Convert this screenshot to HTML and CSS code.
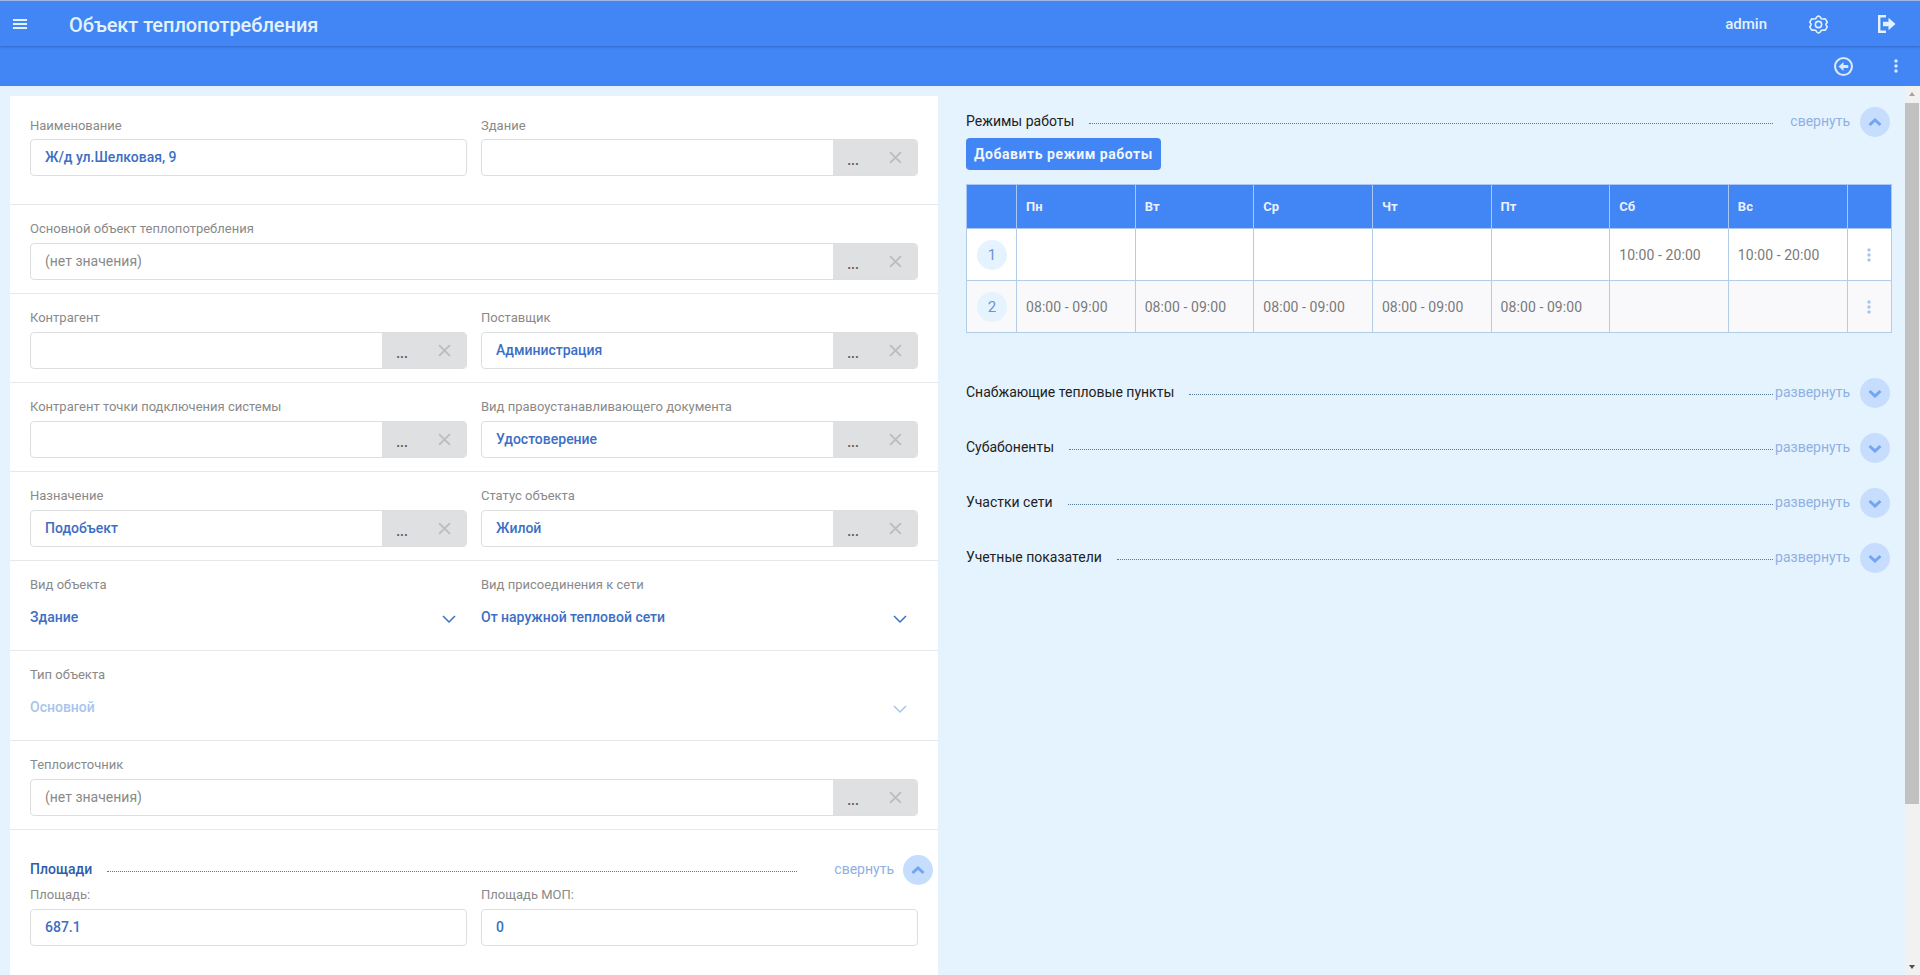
FILE: index.html
```html
<!DOCTYPE html>
<html lang="ru">

<head>
    <meta charset="UTF-8">
    <title>Объект теплопотребления</title>
    <link rel="stylesheet" href="styles.css">
</head>

<body>
    <header class="topbar">
        <svg class="icon-menu" viewBox="0 0 14 10"><path d="M0 0h14v2H0zM0 4h14v2H0zM0 8h14v2H0z"/></svg>
        <h1 class="page-title">Объект теплопотребления</h1>
        <span class="user-name">admin</span>
        <svg class="icon-gear" viewBox="0 0 24 24" fill="none" stroke-width="1.8" stroke-linejoin="round">
            <path d="M12 2.2l2.2 1.3 1 2 2.2.3 2.4-.2 2.2 3.8-1.5 1.9v1.4l1.5 1.9-2.2 3.8-2.4-.2-2.2.3-1 2-2.2 1.3-2.2-1.3-1-2-2.2-.3-2.4.2-2.2-3.8 1.5-1.9v-1.4L2 9.4l2.2-3.8 2.4.2 2.2-.3 1-2z"/>
            <circle cx="12" cy="12" r="3.6"/>
        </svg>
        <svg class="icon-exit" viewBox="0 0 18 18"><path d="M0 0h8v2.400H2.400v13.200H8V18H0z"/><path d="M10.500 2.800L17.500 9l-7 6.200v-4H5V6.800h5.500z"/></svg>
    </header>
    <div class="toolbar">
        <svg class="icon-back" viewBox="0 0 20 20"><path fill-rule="evenodd" d="M10 0a10 10 0 1 1 0 20a10 10 0 0 1 0-20zm0 2.200a7.800 7.800 0 1 0 0 15.600a7.800 7.800 0 0 0 0-15.600z"/><path d="M10 5.200v3.300h5v3h-5v3.300L4.800 10z"/></svg>
        <svg class="icon-dots" viewBox="0 0 4 14"><circle cx="2" cy="2" r="1.700"/><circle cx="2" cy="7" r="1.700"/><circle cx="2" cy="12" r="1.700"/></svg>
    </div>

    <main class="content">
        <section class="form-panel">
            <div class="form-row form-row-first">
                <div class="field">
                    <label>Наименование</label>
                    <div class="input"><span class="value">Ж/д ул.Шелковая, 9</span></div>
                </div>
                <div class="field">
                    <label>Здание</label>
                    <div class="input"><span class="value"></span><div class="input-btns"><span class="btn-more">...</span><svg class="btn-clear" viewBox="0 0 12 12"><path d="M1 1l10 10M11 1L1 11"/></svg></div></div>
                </div>
            </div>
            <div class="form-row">
                <div class="field field-wide">
                    <label>Основной объект теплопотребления</label>
                    <div class="input"><span class="value empty">(нет значения)</span><div class="input-btns"><span class="btn-more">...</span><svg class="btn-clear" viewBox="0 0 12 12"><path d="M1 1l10 10M11 1L1 11"/></svg></div></div>
                </div>
            </div>
            <div class="form-row">
                <div class="field">
                    <label>Контрагент</label>
                    <div class="input"><span class="value"></span><div class="input-btns"><span class="btn-more">...</span><svg class="btn-clear" viewBox="0 0 12 12"><path d="M1 1l10 10M11 1L1 11"/></svg></div></div>
                </div>
                <div class="field">
                    <label>Поставщик</label>
                    <div class="input"><span class="value">Администрация</span><div class="input-btns"><span class="btn-more">...</span><svg class="btn-clear" viewBox="0 0 12 12"><path d="M1 1l10 10M11 1L1 11"/></svg></div></div>
                </div>
            </div>
            <div class="form-row">
                <div class="field">
                    <label>Контрагент точки подключения системы</label>
                    <div class="input"><span class="value"></span><div class="input-btns"><span class="btn-more">...</span><svg class="btn-clear" viewBox="0 0 12 12"><path d="M1 1l10 10M11 1L1 11"/></svg></div></div>
                </div>
                <div class="field">
                    <label>Вид правоустанавливающего документа</label>
                    <div class="input"><span class="value">Удостоверение</span><div class="input-btns"><span class="btn-more">...</span><svg class="btn-clear" viewBox="0 0 12 12"><path d="M1 1l10 10M11 1L1 11"/></svg></div></div>
                </div>
            </div>
            <div class="form-row">
                <div class="field">
                    <label>Назначение</label>
                    <div class="input"><span class="value">Подобъект</span><div class="input-btns"><span class="btn-more">...</span><svg class="btn-clear" viewBox="0 0 12 12"><path d="M1 1l10 10M11 1L1 11"/></svg></div></div>
                </div>
                <div class="field">
                    <label>Статус объекта</label>
                    <div class="input"><span class="value">Жилой</span><div class="input-btns"><span class="btn-more">...</span><svg class="btn-clear" viewBox="0 0 12 12"><path d="M1 1l10 10M11 1L1 11"/></svg></div></div>
                </div>
            </div>
            <div class="form-row form-row-tall">
                <div class="field">
                    <label>Вид объекта</label>
                    <div class="select"><span class="value select-value">Здание</span><svg class="select-arrow" viewBox="0 0 14 9"><path d="M1 1l6 6 6-6"/></svg></div>
                </div>
                <div class="field">
                    <label>Вид присоединения к сети</label>
                    <div class="select"><span class="value select-value">От наружной тепловой сети</span><svg class="select-arrow" viewBox="0 0 14 9"><path d="M1 1l6 6 6-6"/></svg></div>
                </div>
            </div>
            <div class="form-row form-row-tall">
                <div class="field field-wide">
                    <label>Тип объекта</label>
                    <div class="select select-disabled"><span class="value select-value">Основной</span><svg class="select-arrow" viewBox="0 0 14 9"><path d="M1 1l6 6 6-6"/></svg></div>
                </div>
            </div>
            <div class="form-row">
                <div class="field field-wide">
                    <label>Теплоисточник</label>
                    <div class="input"><span class="value empty">(нет значения)</span><div class="input-btns"><span class="btn-more">...</span><svg class="btn-clear" viewBox="0 0 12 12"><path d="M1 1l10 10M11 1L1 11"/></svg></div></div>
                </div>
            </div>
            <div class="area-block">
                <div class="group-head group-head-form">
                    <span class="group-title">Площади</span>
                    <span class="group-line"></span>
                    <span class="group-toggle">свернуть</span>
                    <span class="group-btn"><svg viewBox="0 0 14 9"><path d="M1.500 7L7 2l5.500 5"/></svg></span>
                </div>
                <div class="area-fields">
                    <div class="field">
                        <label>Площадь:</label>
                        <div class="input"><span class="value">687.1</span></div>
                    </div>
                    <div class="field">
                        <label>Площадь МОП:</label>
                        <div class="input"><span class="value">0</span></div>
                    </div>
                </div>
            </div>
        </section>

        <section class="side-panel">
            <div class="group-head">
                <span class="group-title">Режимы работы</span>
                <span class="group-line"></span>
                <span class="group-toggle">свернуть</span>
                <span class="group-btn"><svg viewBox="0 0 14 9"><path d="M1.500 7L7 2l5.500 5"/></svg></span>
            </div>
            <button class="add-btn" type="button">Добавить режим работы</button>
            <table class="modes">
                <thead>
                    <tr><th class="col-num"></th><th>Пн</th><th>Вт</th><th>Ср</th><th>Чт</th><th>Пт</th><th>Сб</th><th>Вс</th><th class="col-menu"></th></tr>
                </thead>
                <tbody>
                    <tr>
                        <td><span class="row-num">1</span></td>
                        <td></td><td></td><td></td><td></td><td></td>
                        <td>10:00 - 20:00</td><td>10:00 - 20:00</td>
                        <td class="cell-menu"><svg class="row-dots" viewBox="0 0 4 14"><circle cx="2" cy="2" r="1.700"/><circle cx="2" cy="7" r="1.700"/><circle cx="2" cy="12" r="1.700"/></svg></td>
                    </tr>
                    <tr class="row-alt">
                        <td><span class="row-num">2</span></td>
                        <td>08:00 - 09:00</td><td>08:00 - 09:00</td><td>08:00 - 09:00</td><td>08:00 - 09:00</td><td>08:00 - 09:00</td>
                        <td></td><td></td>
                        <td class="cell-menu"><svg class="row-dots" viewBox="0 0 4 14"><circle cx="2" cy="2" r="1.700"/><circle cx="2" cy="7" r="1.700"/><circle cx="2" cy="12" r="1.700"/></svg></td>
                    </tr>
                </tbody>
            </table>

            <div class="collapsed-groups">
                <div class="group-head">
                    <span class="group-title">Снабжающие тепловые пункты</span>
                    <span class="group-line"></span>
                    <span class="group-toggle">развернуть</span>
                    <span class="group-btn"><svg viewBox="0 0 14 9"><path d="M1.500 2L7 7l5.500-5"/></svg></span>
                </div>
                <div class="group-head">
                    <span class="group-title">Субабоненты</span>
                    <span class="group-line"></span>
                    <span class="group-toggle">развернуть</span>
                    <span class="group-btn"><svg viewBox="0 0 14 9"><path d="M1.500 2L7 7l5.500-5"/></svg></span>
                </div>
                <div class="group-head">
                    <span class="group-title">Участки сети</span>
                    <span class="group-line"></span>
                    <span class="group-toggle">развернуть</span>
                    <span class="group-btn"><svg viewBox="0 0 14 9"><path d="M1.500 2L7 7l5.500-5"/></svg></span>
                </div>
                <div class="group-head">
                    <span class="group-title">Учетные показатели</span>
                    <span class="group-line"></span>
                    <span class="group-toggle">развернуть</span>
                    <span class="group-btn"><svg viewBox="0 0 14 9"><path d="M1.500 2L7 7l5.500-5"/></svg></span>
                </div>
            </div>
        </section>

        <div class="scrollbar">
            <span class="scroll-up"></span>
            <span class="scroll-thumb"></span>
            <span class="scroll-down"></span>
        </div>
    </main>
</body>

</html>
```

FILE: styles.css
```css
* {
    box-sizing: border-box;
}

html,
body {
    height: 100%;
}

body {
    margin: 0;
    display: flex;
    flex-direction: column;
    overflow: hidden;
    background-color: #e5f3ff;
    font-family: Roboto, "Liberation Sans", sans-serif;
    font-size: 14px;
}

/* Top bars */
.topbar {
    height: 46px;
    flex: none;
    display: flex;
    align-items: center;
    padding: 1px 0 0 13px;
    background-color: #4285f4;
    border-top: 1px solid #9db8e8;
    box-shadow: 0 1px 2px rgba(30, 70, 150, 0.45);
    position: relative;
    color: #e3f2fd;
    fill: #e3f2fd;
    stroke: #e3f2fd;
}

.icon-menu {
    width: 14px;
    height: 10px;
    stroke: none;
}

.page-title {
    margin: 0 0 0 42px;
    padding-top: 2px;
    font-size: 20px;
    font-weight: 500;
    line-height: 24px;
    letter-spacing: -0.05px;
    flex: 1;
}

.user-name {
    font-size: 15px;
    font-weight: 500;
}

.icon-gear {
    width: 21px;
    height: 21px;
    margin-left: 41px;
    fill: none;
}

.icon-exit {
    width: 18px;
    height: 18px;
    margin: 0 24px 0 49px;
    stroke: none;
}

.toolbar {
    height: 40px;
    flex: none;
    display: flex;
    align-items: center;
    justify-content: flex-end;
    padding-right: 22px;
    background-color: #4285f4;
    fill: #dbe9fd;
}

.icon-back {
    width: 19px;
    height: 19px;
    margin-right: 41px;
}

.icon-dots {
    width: 4px;
    height: 14px;
}

/* Main area */
.content {
    flex: 1;
    min-height: 0;
    display: flex;
    overflow: hidden;
}

.form-panel {
    width: 928px;
    margin: 10px 0 0 10px;
    background-color: #fff;
    flex: none;
}

.form-row {
    height: 89px;
    padding: 15px 20px 0;
    display: grid;
    grid-template-columns: 437px 437px;
    column-gap: 14px;
    border-bottom: 1px solid #e6e8ea;
}

.form-row-first {
    height: 109px;
    padding-top: 21px;
}

.form-row-first label {
    margin-bottom: 4px;
}

.form-row-tall {
    height: 90px;
}

.field-wide {
    grid-column: 1 / 3;
}

label {
    display: block;
    height: 18px;
    margin-bottom: 5px;
    color: #8a8a8a;
    font-size: 13px;
    line-height: 18px;
}

.input {
    height: 37px;
    display: flex;
    align-items: center;
    border: 1px solid #dcdee0;
    border-radius: 4px;
    overflow: hidden;
}

.value {
    flex: 1;
    padding: 0 0 2px 14px;
    color: #3c6fc4;
    font-weight: 500;
}

.value.empty {
    color: #8a8a8a;
    font-weight: 400;
}

.input-btns {
    width: 85px;
    height: 37px;
    margin: 0 -1px;
    flex: none;
    display: flex;
    align-items: center;
    background-color: #dfe0e2;
}

.btn-more {
    width: 40px;
    padding-top: 4px;
    text-align: center;
    color: #555;
    font-weight: 500;
}

.btn-clear {
    width: 13px;
    height: 13px;
    margin-left: 16px;
    fill: none;
    stroke: #bcbdc0;
    stroke-width: 1.8;
}

.select {
    height: 37px;
    display: flex;
    align-items: center;
}

.select-value {
    padding-left: 0;
}

.select-arrow {
    width: 14px;
    height: 9px;
    margin: 3px 11px 0 0;
    fill: none;
    stroke: #3c6fc4;
    stroke-width: 1.5;
}

.select-disabled .select-value {
    color: #a9c4ec;
}

.select-disabled .select-arrow {
    stroke: #a9c4ec;
}

/* Areas block */
.area-block {
    padding: 25px 20px 0;
}

.area-fields {
    display: grid;
    grid-template-columns: 437px 437px;
    column-gap: 14px;
    margin-top: 1px;
}

/* Group headers */
.group-head {
    height: 30px;
    display: flex;
    align-items: center;
}

.group-title {
    padding-bottom: 2px;
    color: #222;
    font-size: 14px;
}

.group-line {
    flex: 1;
    margin: 2px 2px 0 15px;
    border-top: 1px dotted #55799b;
}

.group-toggle {
    width: 75px;
    padding-bottom: 2px;
    text-align: right;
    color: #8fb0e3;
    font-size: 14px;
}

.group-btn {
    width: 30px;
    height: 30px;
    margin-left: 10px;
    display: flex;
    align-items: center;
    justify-content: center;
    border-radius: 50%;
    background-color: #c6ddfd;
}

.group-btn svg {
    width: 14px;
    height: 9px;
    fill: none;
    stroke: #72a5f3;
    stroke-width: 3;
}

.group-head-form {
    margin-right: -15px;
}

.group-head-form .group-title {
    color: #2d5ea8;
    font-weight: 500;
}

.group-head-form .group-line {
    margin-right: 37px;
}

.group-head-form .group-toggle {
    width: 60px;
    padding-bottom: 3px;
}

.group-head-form .group-btn {
    margin-left: 9px;
}

/* Right side */
.side-panel {
    flex: 1;
    min-width: 0;
    padding: 21px 13px 0 28px;
}

.side-panel > .group-head {
    padding-right: 2px;
}

.add-btn {
    display: block;
    width: 195px;
    height: 32px;
    margin-top: 1px;
    padding: 0;
    background-color: #4285f4;
    color: #f0f6ff;
    border: none;
    border-radius: 4px;
    font-family: inherit;
    font-size: 14px;
    font-weight: 700;
    letter-spacing: 0.55px;
}

.modes {
    width: 926px;
    margin-top: 14px;
    border-collapse: collapse;
    table-layout: fixed;
    color: #7a7a7a;
    font-size: 14px;
    letter-spacing: 0.08px;
}

.modes th,
.modes td {
    padding: 0 0 0 9px;
    border: 1px solid #b4cde6;
    text-align: left;
}

.modes th {
    height: 44px;
    background-color: #4285f4;
    color: #e8f1ff;
    font-size: 13px;
    font-weight: 700;
    border-color: #a9c8f5;
}

.modes td {
    height: 52px;
    background-color: #fff;
}

.modes .row-alt td {
    background-color: #f9f9fc;
}

.modes .col-num {
    width: 50px;
}

.modes .col-menu {
    width: 44.5px;
}

.row-num {
    display: block;
    width: 30px;
    height: 30px;
    margin-left: 1px;
    border-radius: 50%;
    background-color: #e5f3ff;
    color: #6c93cf;
    font-size: 15px;
    line-height: 30px;
    text-align: center;
}

.modes .cell-menu {
    padding: 0;
    text-align: center;
}

.row-dots {
    display: block;
    width: 4px;
    height: 14px;
    margin: 0 auto;
    fill: #a9c4ec;
}

.collapsed-groups {
    margin-top: 45px;
    padding-right: 2px;
    display: flex;
    flex-direction: column;
    gap: 25px;
}

/* Drawn scrollbar */
.scrollbar {
    width: 15px;
    flex: none;
    display: flex;
    flex-direction: column;
    align-items: stretch;
    background-color: #f1f1f1;
}

.scroll-up {
    height: 17px;
    position: relative;
}

.scroll-up::after {
    content: "";
    position: absolute;
    left: 4px;
    top: 6px;
    border: 3.5px solid transparent;
    border-top: 0;
    border-bottom: 4px solid #a3a3a3;
}

.scroll-thumb {
    height: 701px;
    margin-right: 1px;
    background-color: #c1c1c1;
}

.scroll-down {
    flex: 1;
    position: relative;
}

.scroll-down::after {
    content: "";
    position: absolute;
    left: 4px;
    bottom: 6px;
    border: 3.5px solid transparent;
    border-bottom: 0;
    border-top: 4px solid #505050;
}
```
